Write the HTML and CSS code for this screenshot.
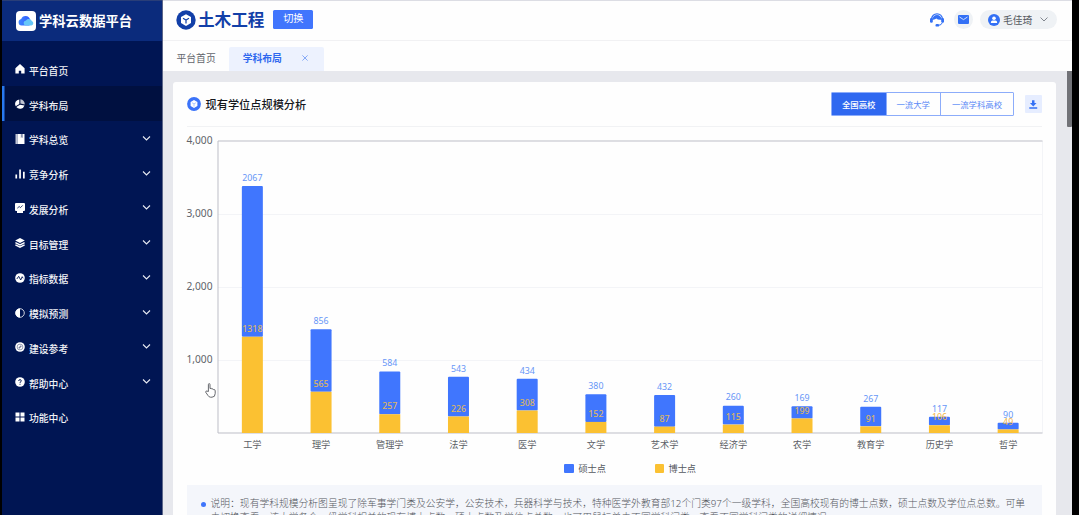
FILE: index.html
```html
<!DOCTYPE html>
<html lang="zh-CN">
<head>
<meta charset="utf-8">
<title>学科云数据平台</title>
<link rel="stylesheet" href="styles.css">
</head>
<body>
<div class="app">
  <aside class="sidebar">
    <div class="brand">
      <svg class="brand-logo" viewBox="0 0 20 20"><defs><linearGradient id="cl" x1="0" x2="1"><stop offset="0" stop-color="#3f86ff"/><stop offset="1" stop-color="#2f5bff"/></linearGradient></defs><rect width="20" height="20" rx="4" fill="#fff"/><path d="M5.500 14.500a3.300 3.300 0 0 1-.3-6.500A4.600 4.600 0 0 1 14 8.300L13.500 14.500z" fill="url(#cl)"/><path d="M9.500 14.500a2.600 2.600 0 0 1 .5-5.100 3.400 3.400 0 0 1 5.800.5 2.400 2.400 0 0 1-.4 4.600z" fill="#66c6f8"/></svg>
      <span>学科云数据平台</span>
    </div>
    <nav class="menu">
      <a class="item"><svg class="ico" viewBox="0 0 10 10"><path d="M5 0 9.600 4.300V9.600H6.200V6.800H3.800V9.600H.4V4.300z"/></svg><span>平台首页</span></a>
      <a class="item active"><svg class="ico" viewBox="0 0 10 10"><path d="M4.300.4V5L.7 7.200A4.600 4.600 0 0 1 4.300.4z"/><path d="M5.400.3A4.700 4.700 0 0 1 9.700 5.500L5.400 4.600z" opacity=".75"/><path d="M5 5.700 9.500 6.500A4.700 4.700 0 0 1 1.300 8z"/></svg><span>学科布局</span></a>
      <a class="item"><svg class="ico" viewBox="0 0 10 10"><path d="M.5 0H2v10H.5z" opacity=".75"/><path d="M2.300 0h7.200v10H2.300z"/><path d="M5.800 0h2v4l-1-.8-1 .8z" fill="#8b94b0"/></svg><span>学科总览</span><svg class="chev" viewBox="0 0 8 5"><path d="M.5.5 4 4 7.500.5"/></svg></a>
      <a class="item"><svg class="ico" viewBox="0 0 10 10"><path d="M.4 5.400h1.700V9.600H.4zM4.200.4h1.700v9.200H4.200zM8 2.800h1.700v6.800H8z"/></svg><span>竞争分析</span><svg class="chev" viewBox="0 0 8 5"><path d="M.5.5 4 4 7.500.5"/></svg></a>
      <a class="item"><svg class="ico" viewBox="0 0 10 10"><path d="M1 0h8q1 0 1 1v6q0 1-1 1H1q-1 0-1-1V1q0-1 1-1zM2 8h6V10h-6z"/><path d="M2.300 5.200 4.200 3.500 5.500 4.600 7.700 2.400" stroke="#001553" fill="none" stroke-width=".8"/></svg><span>发展分析</span><svg class="chev" viewBox="0 0 8 5"><path d="M.5.5 4 4 7.500.5"/></svg></a>
      <a class="item"><svg class="ico" viewBox="0 0 10 10"><path d="M5 0 9.800 2.500 5 5 .2 2.500z"/><path d="M.4 4.600 5 6.900l4.600-2.300M.4 6.900 5 9.200l4.600-2.300" stroke="#fff" stroke-width="1.400" fill="none"/></svg><span>目标管理</span><svg class="chev" viewBox="0 0 8 5"><path d="M.5.5 4 4 7.500.5"/></svg></a>
      <a class="item"><svg class="ico" viewBox="0 0 10 10"><circle cx="5" cy="5" r="4.800"/><path d="M1.800 6 3.700 3.300 5.700 7 7.200 3.700 8.100 5.300" stroke="#001553" fill="none" stroke-width=".9"/></svg><span>指标数据</span><svg class="chev" viewBox="0 0 8 5"><path d="M.5.5 4 4 7.500.5"/></svg></a>
      <a class="item"><svg class="ico" viewBox="0 0 10 10"><circle cx="5" cy="5" r="4.300" fill="none" stroke="#fff" stroke-width=".8"/><path d="M5 .4a4.600 4.600 0 0 0 0 9.200z"/></svg><span>模拟预测</span><svg class="chev" viewBox="0 0 8 5"><path d="M.5.5 4 4 7.500.5"/></svg></a>
      <a class="item"><svg class="ico" viewBox="0 0 10 10"><circle cx="5" cy="5" r="4.800"/><circle cx="5" cy="5" r="2.900" fill="none" stroke="#78809f" stroke-width=".8"/><path d="M3.800 6.300 6.300 3.800" stroke="#78809f" stroke-width="1.400"/></svg><span>建设参考</span><svg class="chev" viewBox="0 0 8 5"><path d="M.5.5 4 4 7.500.5"/></svg></a>
      <a class="item"><svg class="ico" viewBox="0 0 10 10"><circle cx="5" cy="5" r="4.800"/><path d="M3.700 4q0-1.400 1.300-1.400T6.300 3.900Q6.300 4.700 5 5.400V6M5 6.800v1" stroke="#001553" fill="none" stroke-width=".9"/></svg><span>帮助中心</span><svg class="chev" viewBox="0 0 8 5"><path d="M.5.5 4 4 7.500.5"/></svg></a>
      <a class="item"><svg class="ico" viewBox="0 0 10 10"><path d="M.5.5h4v4h-4zM5.500.5h4v4h-4zM.5 5.500h4v4h-4zM5.500 5.500h4v4h-4z"/></svg><span>功能中心</span></a>
    </nav>
  </aside>

  <main class="main">
    <header class="topbar">
      <svg class="subject-logo" viewBox="0 0 20 20"><circle cx="10" cy="10" r="9.700" fill="#123fa8"/><path d="M10 4.200 15 7v6l-5 2.900L5 13V7z" fill="#fff"/><path d="M7 8.300 10 10l3-1.700M10 10v3.500" stroke="#123fa8" stroke-width="1.200" fill="none"/></svg>
      <h1 class="subject">土木工程</h1>
      <button class="switch">切换</button>
      <div class="tools">
        <svg class="service" viewBox="0 0 14 14"><path d="M1.600 6.500C1.600-1.100 12.400-1.100 12.400 6.500" stroke="#3370f5" stroke-width="1.300" fill="none"/><path d="M2.300 6.700A4.700 4.700 0 0 1 11.700 6.700Q8 7.200 6.300 5.600 5 7 2.300 6.700z" fill="#3370f5"/><rect y="5" width="2.800" height="4.800" rx="1.200" fill="#3370f5"/><rect x="11.200" y="5" width="2.800" height="4.800" rx="1.200" fill="#3370f5"/><path d="M12.400 9.500Q11.500 12.300 8.500 12.300" stroke="#3370f5" fill="none"/><rect x="5.500" y="11" width="3.600" height="2.600" rx="1.200" fill="#3370f5"/></svg>
        <span class="mail"><svg viewBox="0 0 11 9"><rect width="11" height="9" rx="1" fill="#3370f5"/><path d="M1.500 2 5.500 4.600l4-2.600" stroke="#dce8ff" stroke-width=".9" fill="none"/></svg></span>
        <span class="user"><svg class="avatar" viewBox="0 0 12 12"><circle cx="6" cy="6" r="6" fill="#3370f5"/><circle cx="6" cy="4.300" r="1.800" fill="#fff"/><path d="M2.900 9V8.200Q2.900 6.600 4.500 6.600h3q1.600 0 1.600 1.600V9z" fill="#fff"/></svg><span>毛佳琦</span><svg class="user-chev" viewBox="0 0 8 5"><path d="M.5.5 4 4 7.500.5"/></svg></span>
      </div>
    </header>
    <div class="tabs">
      <span class="tab">平台首页</span>
      <span class="tab current"><span>学科布局</span><svg viewBox="0 0 6 6"><path d="M.4.4 5.600 5.600M5.600.4.4 5.600"/></svg></span>
    </div>
    <div class="content">
      <section class="card">
        <div class="card-head">
          <svg class="card-logo" viewBox="0 0 14 14"><circle cx="7" cy="7" r="6.900" fill="#3b73f9"/><path d="M7 3.100 10.400 5v4L7 10.900 3.600 9V5z" fill="#fff"/><path d="M4.900 5.700 7 6.900l2.100-1.200M7 6.900v2.600" stroke="#8db0ff" stroke-width=".7" fill="none"/></svg>
          <h2>现有学位点规模分析</h2>
          <div class="segments"><span class="seg on">全国高校</span><span class="seg">一流大学</span><span class="seg wide">一流学科高校</span></div>
          <span class="download"><svg viewBox="0 0 9 9"><path d="M3.200 0h2.600v3H8L4.500 6.500 1 3h2.200zM.3 7.500h8.400V9H.3z"/></svg></span>
        </div>
        <svg class="chart" id="chart" viewBox="186 127 857 328"></svg>
        <div class="legend"><span><i class="key master"></i>硕士点</span><span><i class="key doctor"></i>博士点</span></div>
        <div class="note"><i class="dot"></i><p>说明：现有学科规模分析图呈现了除军事学门类及公安学，公安技术，兵器科学与技术，特种医学外教育部12个门类97个一级学科，全国高校现有的博士点数，硕士点数及学位点总数。可单<br>击切换查看，该大学各个一级学科相关的现有博士点数，硕士点数及学位点总数，也可用鼠标单击不同学科门类，查看不同学科门类的详细情况。</p></div>
      </section>
      <div class="scroll-thumb"></div>
    </div>
  </main>
</div>
<svg class="cursor" viewBox="0 0 11 15"><path d="M3.400 8.500V1.600Q3.400.6 4.200.6T5 1.600V5.500Q6.500 4.800 6.700 6 8.200 5.400 8.400 6.600 10.200 6.200 10.200 7.800V10.500Q10.200 14.200 7 14.200H5.500Q4 14.200 3 12.500L.7 9.200Q.6 7.900 1.800 8z"/></svg>
<script src="chart.js"></script>
</body>
</html>
```
FILE: styles.css
```css
* { box-sizing: border-box; }
body { margin: 0; width: 1079px; height: 515px; overflow: hidden; background: #000; font-family: "Noto Sans", "Noto Sans CJK SC", sans-serif; font-size: 9.8px; color: #555960; }
svg { display: block; flex: none; }
h1, h2, p { margin: 0; }
.app { display: flex; width: 1071.500px; height: 515px; padding-left: 2px; overflow: hidden; }

.sidebar { width: 160.500px; flex: none; background: #001553; color: #fff; border-right: 1px solid #5c6689; }
.brand { height: 41px; display: flex; align-items: center; gap: 3px; padding: 0 0 1px 14px; background: #0b2b7c; border-top: 1px solid #293e78; font-size: 13.300px; font-weight: 700; white-space: nowrap; }
.brand-logo { width: 20px; height: 20px; }
.menu { padding-top: 10.500px; }
.item { height: 34.750px; display: flex; align-items: center; padding: 0 10.500px 0 12.500px; color: #f1f2f6; font-weight: 500; }
.item span { flex: 1; padding: 4px 0 0 4.500px; }
.item.active { background: #001040; box-shadow: inset 2.500px 0 #2878ee; }
.ico { width: 10px; height: 10px; fill: #fff; margin-top: 1px; }
.chev { width: 9px; height: 5px; fill: none; stroke: #e7eaf2; stroke-width: 1.100; }

.main { flex: 1; min-width: 0; display: flex; flex-direction: column; background: #fefefe; }
.topbar { height: 41px; flex: none; display: flex; align-items: center; padding: 0 15px 2px 13.500px; border-top: 1px solid #dcdde4; border-bottom: 1px solid #f1f1f3; }
.subject-logo { width: 20px; height: 20px; }
.subject { margin-left: 2px; font-size: 16.600px; line-height: 20px; font-weight: 700; color: #123fa8; }
.switch { margin-left: 9px; width: 40px; height: 19px; padding: 0 0 1.500px; border: 0; border-radius: 1.500px; background: #4175fd; color: #fff; font: inherit; font-size: 10.200px; line-height: 17px; }
.tools { margin-left: auto; display: flex; align-items: center; gap: 7px; }
.service { width: 14px; height: 14px; margin-right: 3.500px; }
.mail { width: 19px; height: 19px; border-radius: 50%; background: #eff2f5; display: grid; place-items: center; }
.mail svg { width: 11px; height: 9px; }
.user { width: 76.500px; height: 19px; border-radius: 10px; background: #eff2f5; display: flex; align-items: center; padding: 0 9px 0 8px; gap: 3px; }
.avatar { width: 12px; height: 12px; }
.user-chev { width: 8px; height: 5px; margin-left: auto; fill: none; stroke: #666b75; stroke-width: .8; }

.tabs { height: 29.500px; flex: none; display: flex; align-items: flex-end; padding-left: 14px; }
.tab { height: 24px; display: flex; align-items: center; padding-bottom: 1px; color: #62656c; }
.current { width: 95px; margin-left: 13px; padding: 0 16px 1px 14px; justify-content: space-between; background: #edf2fe; border-radius: 2px 2px 0 0; color: #2f68ef; font-weight: 700; }
.current svg { width: 6px; height: 6px; fill: none; stroke: #6b97f5; stroke-width: .8; }

.content { flex: 1; min-height: 0; display: flex; justify-content: space-between; background: #e7e8ed; padding-left: 10.500px; }
.card { width: 883px; margin-top: 11.500px; padding: 0 14px 0 13.500px; background: #fefefe; border-radius: 3px 3px 0 0; overflow: hidden; }
.card-head { height: 45px; display: flex; align-items: center; border-bottom: 1px solid #f1f2f4; }
.card-logo { width: 14px; height: 14px; }
.card-head h2 { margin-left: 5px; font-size: 11.200px; font-weight: 500; color: #15171c; }
.segments { margin-left: auto; height: 24px; display: flex; border: 1px solid #8cacfa; border-radius: 1px; font-size: 8.400px; color: #5a8af6; }
.seg { width: 54.500px; display: grid; place-items: center; border-right: 1px solid #8cacfa; }
.seg.on { background: #2f68f0; color: #fff; font-weight: 500; }
.seg.wide { width: 72px; border-right: 0; }
.download { margin-left: 11px; width: 17px; height: 18px; display: grid; place-items: center; background: #e6edff; border-radius: 1px; }
.download svg { width: 8.500px; height: 9px; fill: #3370f5; }

.chart { width: 857px; height: 328px; margin-left: -.5px; }
.axis { fill: none; stroke: #bdbec7; }
.grid { stroke: #f3f4f7; stroke-width: 1; }
.tick { font-size: 10.200px; fill: #60636a; text-anchor: end; }
.cat { font-size: 9.200px; fill: #5c5f66; text-anchor: middle; }
.value { font-size: 8.800px; text-anchor: middle; }
.value-master { fill: #6796f7; }
.value-doctor { fill: #dbb568; font-weight: 500; }
.value-outside { fill: #f3b647; }
.bar-master { fill: #4076fe; }
.bar-doctor { fill: #fbc132; }

.legend { height: 29.500px; display: flex; align-items: flex-start; justify-content: center; gap: 48.500px; padding: 6.500px 0 0 32px; font-size: 9.200px; line-height: 14px; }
.legend span { display: flex; align-items: center; }
.key { width: 9.500px; height: 9.500px; margin-right: 4.500px; border-radius: 1px; }
.master { background: #4076fe; }
.doctor { background: #fbc132; }

.note { height: 32px; display: flex; padding: 12px 0 0 14px; background: #f4f6fb; line-height: 14px; color: #54585f; font-size: 9.790px; overflow: hidden; }
.dot { width: 5px; height: 5px; flex: none; margin: 5px 5px 0 0; border-radius: 50%; background: #3f75fb; }
.note p { white-space: nowrap; font-weight: 300; }
.scroll-thumb { width: 4.500px; height: 56px; background: #717277; border-radius: 0 0 1px 1px; }
.cursor { position: absolute; left: 205px; top: 382.500px; width: 11px; height: 15px; fill: #fff; stroke: #56585e; stroke-width: .9; }
```
FILE: chart.js
```js
const rows = [
  ['工学', 2067, 1318], ['理学', 856, 565], ['管理学', 584, 257], ['法学', 543, 226],
  ['医学', 434, 308], ['文学', 380, 152], ['艺术学', 432, 87], ['经济学', 260, 115],
  ['农学', 169, 199], ['教育学', 267, 91], ['历史学', 117, 106], ['哲学', 90, 49]
];
const left = 218, right = 1042.5, top_ = 141, base = 433;
const y = v => base - v * (base - top_) / 4000;
let out = '';
for (const t of [1000, 2000, 3000]) {
  out += `<line class="grid" x1="${left}" x2="${right}" y1="${Math.round(y(t)) + .5}" y2="${Math.round(y(t)) + .5}"/>`;
}
for (const t of [1000, 2000, 3000, 4000]) {
  out += `<text class="tick" x="212.500" y="${y(t) + 3}">${t.toLocaleString('en-US')}</text>`;
}
out += `<line class="grid" x1="${right}" x2="${right}" y1="${top_}" y2="${base}"/>`;
out += `<path class="axis" d="M${right} ${top_}H${left}V${base}H${right}"/>`;
const step = (right - left) / rows.length;
rows.forEach(([name, m, d], i) => {
  const cx = left + step * (i + .5), x = cx - 10.5;
  out += `<rect class="bar-master" x="${x}" y="${y(m + d)}" width="21" height="${y(d) - y(m + d)}" rx="1"/>`;
  out += `<rect class="bar-doctor" x="${x}" y="${y(d)}" width="21" height="${base - y(d)}"/>`;
  out += `<text class="value value-master" x="${cx}" y="${y(m + d) - 5.200}">${m}</text>`;
  out += `<text class="value ${m < 120 ? 'value-outside' : 'value-doctor'}" x="${cx}" y="${y(d) - 4.800}">${d}</text>`;
  out += `<text class="cat" x="${cx}" y="448">${name}</text>`;
});
document.getElementById('chart').innerHTML = out;
```
